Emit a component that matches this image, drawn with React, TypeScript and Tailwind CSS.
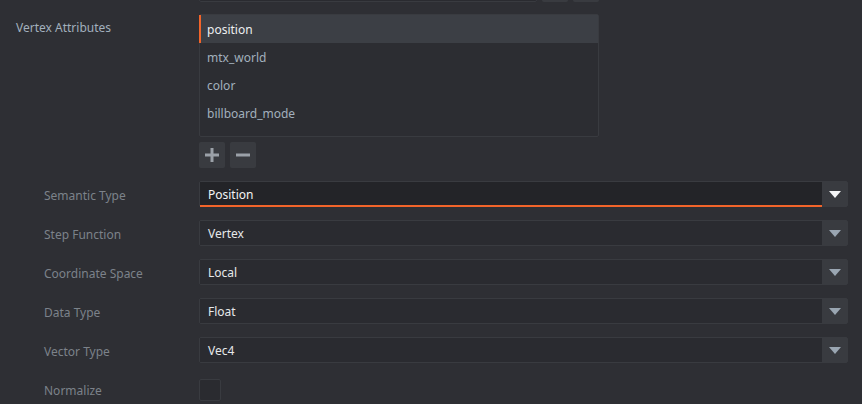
import * as React from "react";

const font = { fontFamily: '"Noto Sans", "Open Sans", sans-serif' };

const attributes = ["position", "mtx_world", "color", "billboard_mode"];

const fields = [
  { label: "Semantic Type", value: "Position", focused: true },
  { label: "Step Function", value: "Vertex" },
  { label: "Coordinate Space", value: "Local" },
  { label: "Data Type", value: "Float" },
  { label: "Vector Type", value: "Vec4" },
];

function Caret({ light }: { light?: boolean }) {
  return (
    <svg width="12" height="7" viewBox="0 0 12 7" aria-hidden="true">
      <path d="M0 0h12L6 7z" fill={light ? "#f4f5f6" : "#9aa6b2"} />
    </svg>
  );
}

function Select({ value, focused }: { value: string; focused?: boolean }) {
  return (
    <div className="flex h-[26px] w-[649px] rounded-[2px] border border-[#393b40]">
      <div
        className={`relative flex flex-1 items-center px-2 pt-[2px] text-[12px] ${
          focused ? "bg-[#232428] text-[#f3f4f5]" : "bg-[#2a2b30] text-[#e6e8ea]"
        }`}
      >
        {value}
        {focused ? (
          <span className="absolute -bottom-px left-0 right-0 h-[2px] bg-[#f2642a]" />
        ) : null}
      </div>
      <div className="flex w-[25px] items-center justify-center bg-[#393b40]">
        <Caret light={focused} />
      </div>
    </div>
  );
}

export default function App() {
  return (
    <div className="h-[404px] w-[862px] overflow-hidden bg-[#2e2f34]" style={font}>
      {/* tail of the row above */}
      <div className="flex h-[2px] items-end gap-[5px] overflow-hidden pl-[199px]">
        <div className="h-[26px] w-[338px] shrink-0 rounded-[2px] border border-[#393b40] bg-[#2a2b30]" />
        <div className="h-[26px] w-[26px] shrink-0 rounded-[2px] bg-[#393b40]" />
        <div className="h-[26px] w-[26px] shrink-0 rounded-[2px] bg-[#393b40]" />
      </div>

      <div className="mt-[12px] flex">
        <div className="w-[199px] pl-4 pt-[5px] text-[12px] text-[#a2b0bd]">Vertex Attributes</div>
        <div className="flex flex-col gap-[5px]">
          <div className="h-[123px] w-[400px] rounded-[2px] border border-[#393b40] bg-[#2c2d32]">
            {attributes.map((a, i) => (
              <div
                key={a}
                className={
                  i === 0
                    ? "-ml-px flex h-[28px] items-center border-l-2 border-[#f2642a] bg-[#3c3f45] pl-[6px] pt-[2px] text-[12px] text-[#eceef0]"
                    : "flex h-[28px] items-center pl-[7px] pt-[2px] text-[12px] text-[#a2b0bd]"
                }
              >
                {a}
              </div>
            ))}
          </div>
          <div className="flex gap-[5px]">
            <button
              type="button"
              className="flex h-[26px] w-[26px] items-center justify-center rounded-[2px] bg-[#393b40]"
            >
              <svg width="14" height="14" viewBox="0 0 14 14" aria-hidden="true">
                <path d="M5.5 0h3v5.5H14v3H8.5V14h-3V8.5H0v-3h5.5z" fill="#9ba1a8" />
              </svg>
            </button>
            <button
              type="button"
              className="flex h-[26px] w-[26px] items-center justify-center rounded-[2px] bg-[#393b40]"
            >
              <svg width="14" height="14" viewBox="0 0 14 14" aria-hidden="true">
                <path d="M0 5.5h14v3H0z" fill="#9ba1a8" />
              </svg>
            </button>
          </div>
        </div>
      </div>

      <div className="mt-[13px] flex flex-col gap-[13px]">
        {fields.map((f) => (
          <div key={f.label} className="flex items-center">
            <div className="w-[199px] pl-11 pt-[3px] text-[12px] text-[#7c828a]">{f.label}</div>
            <Select value={f.value} focused={f.focused} />
          </div>
        ))}
        <div className="mt-[3px] flex items-center">
          <div className="w-[199px] pl-11 pt-px text-[12px] text-[#7c828a]">Normalize</div>
          <div className="h-[22px] w-[22px] rounded-[2px] border border-[#393b40] bg-[#2a2b30]" />
        </div>
      </div>
    </div>
  );
}
